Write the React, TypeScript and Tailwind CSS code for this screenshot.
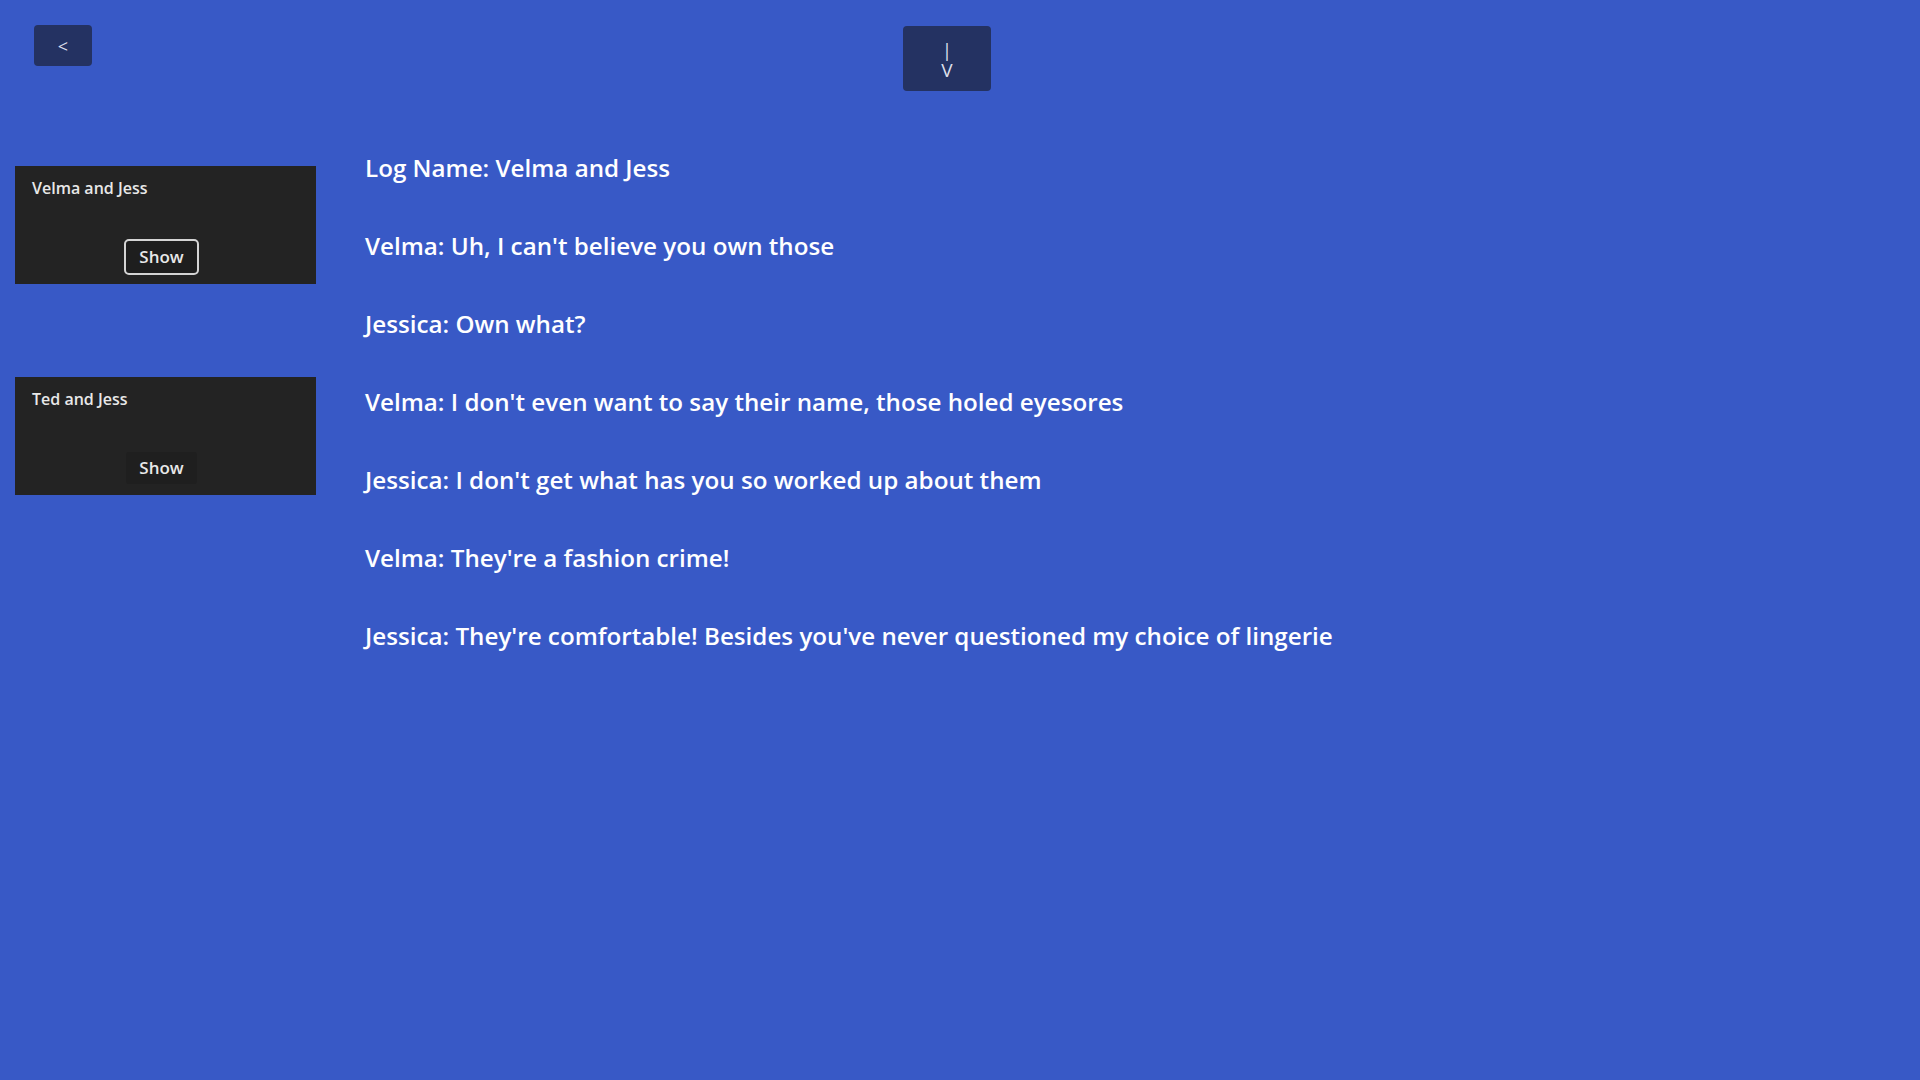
import React from "react";

const lines = [
  "Log Name: Velma and Jess",
  "Velma: Uh, I can't believe you own those",
  "Jessica: Own what?",
  "Velma: I don't even want to say their name, those holed eyesores",
  "Jessica: I don't get what has you so worked up about them",
  "Velma: They're a fashion crime!",
  "Jessica: They're comfortable! Besides you've never questioned my choice of lingerie",
];

function Card({ title, focused }: { title: string; focused?: boolean }) {
  return (
    <div className="w-[301px] h-[118px] bg-[#232323] flex flex-col">
      <div className="pl-[17px] pt-[10px] text-[16px] leading-[24px] font-semibold text-[#e8e8e8]">{title}</div>
      <div className="pl-[111px] mt-[41px]">
        <button
          className={
            focused
              ? "w-[71px] h-[32px] rounded-[3px] bg-[#1e1e1e] text-[17px] font-semibold text-[#e8e8e8] outline-2 outline-[#d4d4d4] outline-offset-0"
              : "w-[71px] h-[32px] rounded-[3px] bg-[#1f1f1f] text-[17px] font-semibold text-[#e8e8e8]"
          }
        >
          Show
        </button>
      </div>
    </div>
  );
}

export default function App() {
  return (
    <div
      className="w-full h-screen bg-[#3859c6] overflow-hidden"
      style={{ fontFamily: '"Open Sans", "Noto Sans", sans-serif' }}
    >
      <div className="flex items-start pt-[25px] pl-[34px]">
        <button className="w-[58px] h-[41px] rounded-[4px] bg-[#243262] text-[#dcdfea] text-[18px] leading-none flex items-center justify-center">
          &lt;
        </button>
        <button className="ml-[811px] mt-[1px] w-[88px] h-[65px] rounded-[4px] bg-[#243262] text-[#dcdfea] text-[19px] flex flex-col items-center justify-center gap-[1px] pt-[2px]">
          <span className="leading-[20px]">|</span>
          <span className="leading-[18px]">V</span>
        </button>
      </div>
      <div className="flex mt-[9px]">
        <div className="pl-[15px] pt-[66px] flex flex-col gap-[93px]">
          <Card title="Velma and Jess" focused />
          <Card title="Ted and Jess" />
        </div>
        <div className="pl-[49px] pt-[29px] text-white text-[24.2px] leading-[78px] font-semibold">
          {lines.map((l, i) => (
            <div key={i}>{l}</div>
          ))}
        </div>
      </div>
    </div>
  );
}
